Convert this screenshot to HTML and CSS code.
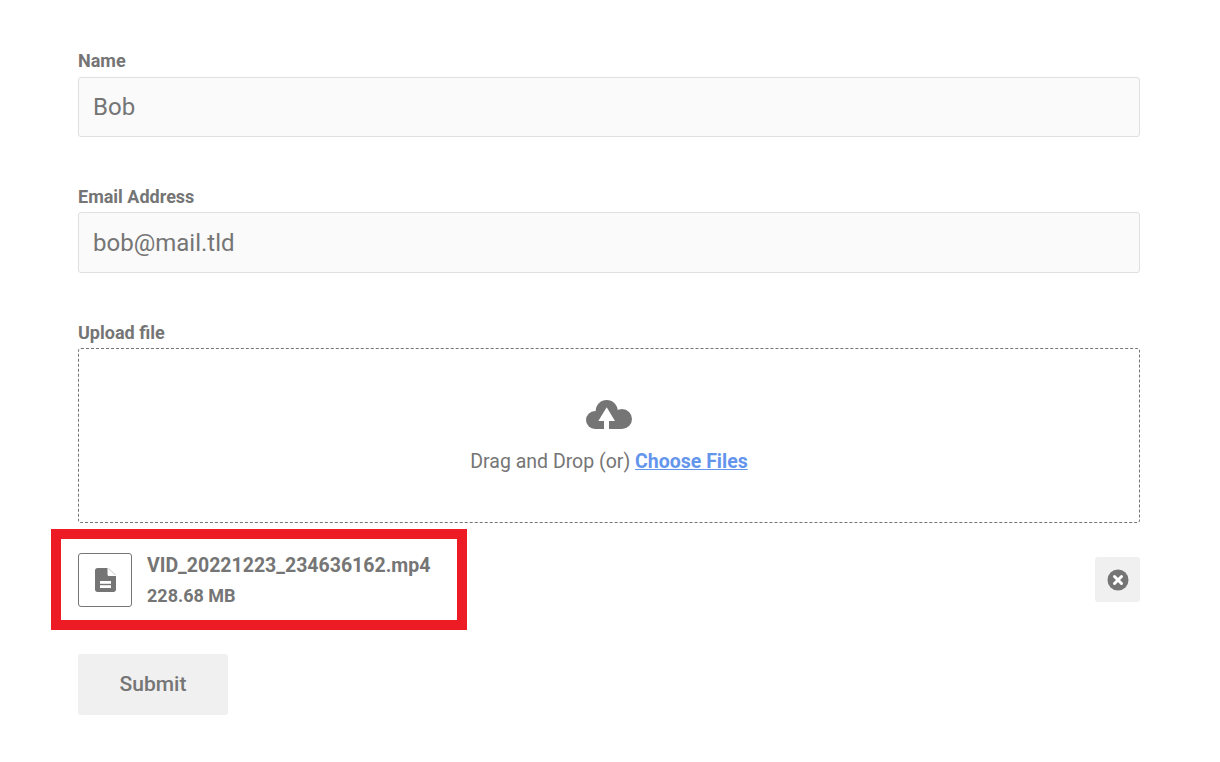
FILE: index.html
```html
<!DOCTYPE html>
<html lang="en">
<head>
    <meta charset="UTF-8">
    <meta name="viewport" content="width=device-width, initial-scale=1.0">
    <title>Upload form</title>
    <link rel="stylesheet" href="styles.css">
</head>
<body>
<form class="form" action="">
    <div class="field field-first">
        <label class="field-label" for="name">Name</label>
        <input class="text-input" id="name" type="text" value="Bob">
    </div>
    <div class="field">
        <label class="field-label" for="email">Email Address</label>
        <input class="text-input text-input-tall" id="email" type="text" value="bob@mail.tld">
    </div>
    <div class="field field-upload">
        <span class="field-label">Upload file</span>
        <div class="dropzone">
            <svg class="cloud-icon" viewBox="0 0 46 29" width="46" height="29" aria-hidden="true">
                <g fill="#757575">
                    <circle cx="20.7" cy="11" r="11"/>
                    <circle cx="9" cy="20" r="9"/>
                    <circle cx="36" cy="19" r="10"/>
                    <rect x="9" y="16" width="27" height="13"/>
                </g>
                <path fill="#fff" d="M20.700 7.300 29 21h-6v8h-5v-8h-5.700z"/>
            </svg>
            <p class="drop-text">Drag and Drop (or) <a class="choose-link" href="#">Choose Files</a></p>
        </div>
    </div>
    <div class="file-row">
        <div class="file-thumb">
            <svg viewBox="0 0 21 24" width="21" height="24" aria-hidden="true">
                <path fill="#757575" d="M2.500 0H12.500v6.500c0 .8.700 1.500 1.500 1.500H21v13.500c0 1.400-1.100 2.500-2.500 2.500h-16C1.100 24 0 22.900 0 21.500v-19C0 1.100 1.100 0 2.500 0z"/>
                <path fill="#b8b8b8" d="M13.500 0l7.500 7h-.9L13.500 .8z"/>
                <rect x="5" y="13" width="11" height="2.800" fill="#fff"/>
                <rect x="5" y="17.200" width="11" height="2.800" fill="#fff"/>
            </svg>
        </div>
        <div class="file-info">
            <div class="file-name">VID_20221223_234636162.mp4</div>
            <div class="file-size">228.68 MB</div>
        </div>
        <button class="remove-button" type="button" aria-label="Remove">
            <svg viewBox="0 0 22 22" width="22" height="22" aria-hidden="true">
                <circle cx="11" cy="11" r="10.500" fill="#757575"/>
                <path d="M7.500 7.500l7 7M14.500 7.500l-7 7" stroke="#fff" stroke-width="3" stroke-linecap="round" fill="none"/>
            </svg>
        </button>
    </div>
    <button class="submit-button" type="button">Submit</button>
</form>
<div class="highlight"></div>
</body>
</html>
```

FILE: styles.css
```css
body {
    margin: 0;
    background-color: #fff;
    color: #757575;
    font-family: Roboto, "Liberation Sans", sans-serif;
}

.form {
    padding: 50px 80px 47px 78px;
}

.field {
    margin-bottom: 49px;
}

.field-upload {
    margin-bottom: 0;
}

.field-label {
    display: block;
    height: 21px;
    margin-bottom: 5px;
    font-size: 18px;
    line-height: 21px;
    font-weight: 700;
    color: #757575;
}

.field-first .field-label {
    margin-bottom: 6px;
}

.text-input {
    display: block;
    box-sizing: border-box;
    width: 100%;
    height: 60px;
    padding: 0 14px;
    border: 1px solid #e0e0e0;
    border-radius: 3px;
    background-color: #fafafa;
    color: #757575;
    font-family: inherit;
    font-size: 24px;
}

.text-input-tall {
    height: 61px;
}

.dropzone {
    box-sizing: border-box;
    height: 175px;
    padding-top: 51px;
    border: 1px dashed #757575;
    border-radius: 3px;
    text-align: center;
}

.cloud-icon {
    display: block;
    margin: 0 auto;
}

.drop-text {
    margin: 21px 0 0;
    font-size: 19.5px;
    line-height: 24px;
}

.choose-link {
    color: #6495ed;
    font-weight: 700;
}

.file-row {
    display: flex;
    align-items: center;
    margin-top: 30px;
}

.file-thumb {
    display: flex;
    align-items: center;
    justify-content: center;
    box-sizing: border-box;
    width: 54px;
    height: 54px;
    border: 1px solid #757575;
    border-radius: 3px;
}

.file-info {
    flex: 1;
    margin-left: 15px;
    padding-top: 1px;
    font-weight: 700;
}

.file-name {
    font-size: 19.5px;
    line-height: 24px;
}

.file-size {
    margin-top: 6px;
    font-size: 18px;
    line-height: 23px;
}

.remove-button {
    display: flex;
    align-items: center;
    justify-content: center;
    width: 45px;
    height: 45px;
    margin-bottom: 1px;
    padding: 0;
    border: none;
    border-radius: 3px;
    background-color: #f0f0f0;
}

.submit-button {
    display: block;
    width: 150px;
    height: 61px;
    margin-top: 47px;
    padding: 0 0 2px;
    border: none;
    border-radius: 3px;
    background-color: #f0f0f0;
    color: #757575;
    font-family: inherit;
    font-size: 21px;
    font-weight: 500;
}

/* annotation drawn over the screenshot */
.highlight {
    position: absolute;
    left: 51px;
    top: 529px;
    width: 396px;
    height: 81px;
    border: 10px solid #ed1c24;
}
```
